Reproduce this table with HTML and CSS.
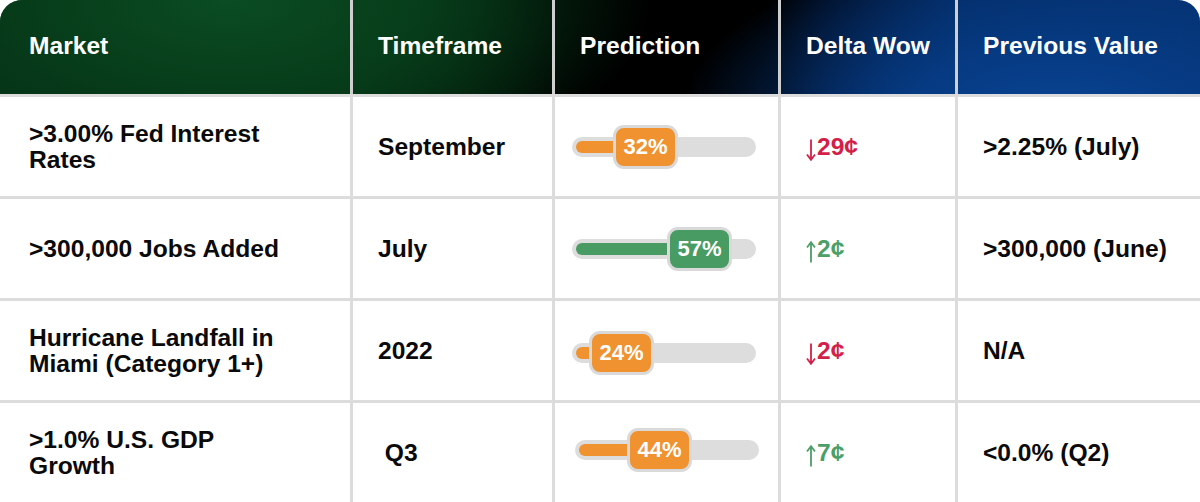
FILE: index.html
```html
<!DOCTYPE html>
<html>
<head>
<meta charset="utf-8">
<link rel="stylesheet" href="styles.css">
</head>
<body>
<div class="table">
  <div class="row head">
    <div class="cell c1">Market</div>
    <div class="cell c2">Timeframe</div>
    <div class="cell c3">Prediction</div>
    <div class="cell c4">Delta Wow</div>
    <div class="cell c5">Previous Value</div>
  </div>
  <div class="row body">
    <div class="cell c1">&gt;3.00% Fed Interest<br>Rates</div>
    <div class="cell c2">September</div>
    <div class="cell c3">
      <div class="track">
        <div class="fill orange" style="width:74px"></div>
        <div class="bubble orange" style="left:41px">32%</div>
      </div>
    </div>
    <div class="cell c4 down"><svg class="arr" width="10" height="22" viewBox="0 0 10 22"><path d="M5 0.5V20.5M1 15.5L5 20.8L9 15.5" fill="none" stroke="currentColor" stroke-width="1.8"/></svg>29¢</div>
    <div class="cell c5">&gt;2.25% (July)</div>
  </div>
  <div class="row body">
    <div class="cell c1">&gt;300,000 Jobs Added</div>
    <div class="cell c2">July</div>
    <div class="cell c3">
      <div class="track">
        <div class="fill green" style="width:128px"></div>
        <div class="bubble green" style="left:95px">57%</div>
      </div>
    </div>
    <div class="cell c4 up"><svg class="arr" width="10" height="22" viewBox="0 0 10 22"><path d="M5 1.5V21.5M1 6.5L5 1.2L9 6.5" fill="none" stroke="currentColor" stroke-width="1.8"/></svg>2¢</div>
    <div class="cell c5">&gt;300,000 (June)</div>
  </div>
  <div class="row body">
    <div class="cell c1">Hurricane Landfall in<br>Miami (Category 1+)</div>
    <div class="cell c2">2022</div>
    <div class="cell c3">
      <div class="track low">
        <div class="fill orange" style="width:50px"></div>
        <div class="bubble orange" style="left:17px">24%</div>
      </div>
    </div>
    <div class="cell c4 down"><svg class="arr" width="10" height="22" viewBox="0 0 10 22"><path d="M5 0.5V20.5M1 15.5L5 20.8L9 15.5" fill="none" stroke="currentColor" stroke-width="1.8"/></svg>2¢</div>
    <div class="cell c5">N/A</div>
  </div>
  <div class="row body last">
    <div class="cell c1">&gt;1.0% U.S. GDP<br>Growth</div>
    <div class="cell c2">&nbsp;Q3</div>
    <div class="cell c3 shift">
      <div class="track">
        <div class="fill orange" style="width:84px"></div>
        <div class="bubble orange" style="left:52px">44%</div>
      </div>
    </div>
    <div class="cell c4 up"><svg class="arr" width="10" height="22" viewBox="0 0 10 22"><path d="M5 1.5V21.5M1 6.5L5 1.2L9 6.5" fill="none" stroke="currentColor" stroke-width="1.8"/></svg>7¢</div>
    <div class="cell c5">&lt;0.0% (Q2)</div>
  </div>
</div>
</body>
</html>
```

FILE: styles.css
```css
* { box-sizing: border-box; }
html, body {
  margin: 0;
  padding: 0;
  background: #ffffff;
}
body {
  width: 1200px;
  height: 502px;
  overflow: hidden;
  font-family: "Liberation Sans", Arial, sans-serif;
  font-weight: bold;
  color: #0a0a0a;
}
.table {
  display: flex;
  flex-direction: column;
  width: 1200px;
}
.row {
  display: grid;
  grid-template-columns: 353px 202px 226px 177px 242px;
}
.head {
  height: 97px;
  border-bottom: 3px solid #dcdcdc;
  border-radius: 22px 22px 0 0;
  color: #ffffff;
  background:
    radial-gradient(ellipse 420px 200px at 230px 0px, #0a4c23 0%, #073d1a 45%, rgba(4,40,16,0) 100%),
    radial-gradient(ellipse 380px 180px at 1060px 120px, #0a4594 0%, #063a82 40%, rgba(3,30,70,0) 100%),
    linear-gradient(90deg, #042c15 0%, #03280f 30%, #000000 47%, #000000 64%, #010d22 69%, #03285e 80%, #052f6c 100%);
}
.body {
  height: 102px;
  border-bottom: 3px solid #dcdcdc;
}
.body.last {
  height: 99px;
  border-bottom: none;
}
.cell {
  display: flex;
  align-items: center;
  padding-left: 25px;
  font-size: 24.6px;
  line-height: 26px;
  border-right: 3px solid #dcdcdc;
  white-space: nowrap;
}
.head .cell {
  font-size: 24.6px;
  padding-bottom: 2px;
  border-right-color: #cfcfcf;
}
.cell.c1 { padding-left: 29px; }
.cell.c5 { border-right: none; }
.body .c3 { padding-left: 17px; }
.body .c3.shift { padding-left: 20px; }
.track {
  position: relative;
  width: 184px;
  height: 20px;
  border-radius: 10px;
  background: #dddddd;
}
.track.low { margin-top: 4px; }
.c3.shift .track { margin-top: -6px; }
.fill {
  position: absolute;
  left: 4px;
  top: 4px;
  height: 12px;
  border-radius: 6px;
}
.orange { background: #ef922f; }
.green { background: #489b62; }
.bubble {
  position: absolute;
  top: -12px;
  width: 65px;
  height: 44px;
  border: 3px solid #d9d9d9;
  border-radius: 11px;
  color: #ffffff;
  font-size: 22px;
  line-height: 38px;
  text-align: center;
}
.down { color: #d31f49; }
.up { color: #4b9f67; }
.arr {
  display: block;
  flex: none;
  margin: 6px 1px 0 0;
}
```
